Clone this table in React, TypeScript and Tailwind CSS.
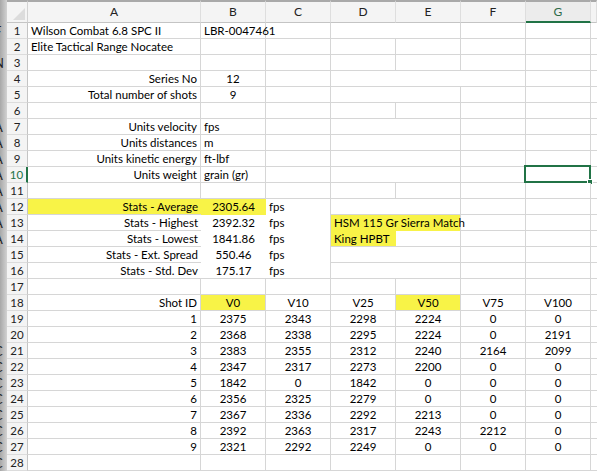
import { ReactNode } from "react";

type Cell = {
  t?: string;
  s?: number;
  a?: "l" | "r" | "c";
  y?: boolean;
  nr?: boolean;
  nb?: boolean;
  sel?: boolean;
};

const SPAN: Record<number, string> = { 1: "", 2: "col-span-2", 3: "col-span-3" };
const ALIGN = { l: "justify-start", r: "justify-end", c: "justify-center" };

const empty = (): Cell[] => [{}, {}, {}, {}, {}, {}, {}];

const label = (a: string, b: string): Cell[] => [
  { t: a, a: "r" },
  { t: b },
  {},
  { s: 2 },
  {},
  {},
];

const stat = (a: string, b: string, d: Cell[], last = false): Cell[] => [
  { t: a, a: "r", nr: true },
  { t: b, a: "c", nr: true, nb: !last },
  { t: "fps", nb: !last },
  ...d,
];

const shots = [
  [2375, 2343, 2298, 2224, 0, 0],
  [2368, 2338, 2295, 2224, 0, 2191],
  [2383, 2355, 2312, 2240, 2164, 2099],
  [2347, 2317, 2273, 2200, 0, 0],
  [1842, 0, 1842, 0, 0, 0],
  [2356, 2325, 2279, 0, 0, 0],
  [2367, 2336, 2292, 2213, 0, 0],
  [2392, 2363, 2317, 2243, 2212, 0],
  [2321, 2292, 2249, 0, 0, 0],
];

const rows: Cell[][] = [
  [{ t: "Wilson Combat 6.8 SPC II" }, { t: "LBR-0047461" }, {}, { s: 2 }, {}, {}],
  [{ t: "Elite Tactical Range Nocatee" }, {}, {}, {}, {}, {}, {}],
  empty(),
  [{ t: "Series No", a: "r" }, { t: "12", a: "c" }, {}, { s: 3 }, {}],
  [{ t: "Total number of shots", a: "r" }, { t: "9", a: "c" }, {}, { s: 2 }, {}, {}],
  empty(),
  label("Units velocity", "fps"),
  label("Units distances", "m"),
  label("Units kinetic energy", "ft-lbf"),
  [{ t: "Units weight", a: "r" }, { t: "grain (gr)" }, {}, { s: 2 }, {}, { sel: true }],
  empty(),
  [
    { t: "Stats - Average", a: "r", y: true, nr: true },
    { t: "2305.64", a: "c", y: true, nr: true, nb: true },
    { t: "fps", nb: true },
    { s: 2 },
    {},
    {},
  ],
  stat("Stats - Highest", "2392.32", [{ t: "HSM 115 Gr Sierra Match", s: 2, y: true, nb: true }, {}, {}]),
  stat("Stats - Lowest", "1841.86", [{ t: "King HPBT", y: true, nr: true }, {}, {}, {}]),
  stat("Stats - Ext. Spread", "550.46", [{ s: 2 }, {}, {}]),
  stat("Stats - Std. Dev", "175.17", [{ s: 2 }, {}, {}], true),
  empty(),
  [
    { t: "Shot ID", a: "r" },
    { t: "V0", a: "c", y: true },
    { t: "V10", a: "c" },
    { t: "V25", a: "c" },
    { t: "V50", a: "c", y: true },
    { t: "V75", a: "c" },
    { t: "V100", a: "c" },
  ],
  ...shots.map((r, i) => [
    { t: String(i + 1), a: "r" as const },
    ...r.map((v) => ({ t: String(v), a: "c" as const })),
  ]),
  empty(),
];

// glyphs peeking out from the window behind
const behind: Record<number, string> = {
  0: "F",
  2: "N",
  6: "A",
  7: "A",
  8: "A",
  9: "A",
  10: "A",
  11: "A",
  12: "A",
  13: "A",
  20: "C",
  21: "C",
  22: "C",
  23: "C",
  24: "C",
  25: "C",
  26: "C",
  27: "C",
};

function SheetCell({ c }: { c: Cell }): ReactNode {
  return (
    <div
      className={`relative flex items-center px-[3px] whitespace-nowrap border-[#d6d6d6] ${SPAN[c.s ?? 1]} ${
        ALIGN[c.a ?? "l"]
      } ${c.nr ? "" : "border-r"} ${c.nb ? "" : "border-b"} ${c.y ? "bg-[#f8f347]" : "bg-white"}`}
    >
      <span className="z-10">{c.t}</span>
      {c.sel && (
        <div className="absolute left-[-2px] top-[-2px] w-[67px] h-[18px] border-2 border-[#217346]">
          <div className="absolute right-[-4px] bottom-[-4px] w-[6px] h-[6px] bg-[#217346] border border-white" />
        </div>
      )}
    </div>
  );
}

export default function App() {
  return (
    <div className="flex w-[597px] h-[471px] overflow-hidden bg-white text-black font-['Lato',sans-serif] text-[11.5px]">
      <div className="w-[7px] shrink-0 flex flex-col bg-gradient-to-r from-[#a8a8a8] to-[#d2d2d2] overflow-hidden">
        <div className="h-[23px] shrink-0" />
        {rows.map((_, i) => (
          <div key={i} className="h-[16px] shrink-0 flex items-center overflow-hidden">
            <span className="ml-[-6px] text-[13px] leading-[14px] text-[#222]">{behind[i] ?? ""}</span>
          </div>
        ))}
      </div>
      <div className="flex-1 grid grid-cols-[21px_173px_65px_65px_65px_65px_65px_65px_1fr] grid-rows-[23px] auto-rows-[16px] content-start">
        <div className="relative border-t-2 border-t-[#a9a9a9] border-r border-b border-r-[#d2d2d2] border-b-[#c4c4c4] bg-[#f4f4f4]">
          <svg className="absolute right-[2px] bottom-[2px]" width="12" height="12" viewBox="0 0 12 12">
            <path d="M12 0 L12 12 L0 12 Z" fill="#dcdcdc" />
          </svg>
        </div>
        {["A", "B", "C", "D", "E", "F", "G", ""].map((h) => (
          <div
            key={h}
            className={`flex items-center justify-center text-[12px] border-t-2 border-t-[#a9a9a9] border-r border-r-[#dedede] ${
              h === "G"
                ? "border-b-2 border-b-[#217346] bg-[#ececec] text-[#2c6a48]"
                : "border-b border-b-[#c4c4c4] bg-[#f4f4f4] text-[#222]"
            }`}
          >
            {h}
          </div>
        ))}
        {rows.map((r, i) => (
          <RowCells key={i} n={i + 1} cells={r} />
        ))}
      </div>
    </div>
  );
}

function RowCells({ n, cells }: { n: number; cells: Cell[] }) {
  return (
    <>
      <div
        className={`flex items-center justify-center bg-[#f4f4f4] border-b border-b-[#dcdcdc] ${
          n === 10 ? "border-r-2 border-r-[#217346] text-[#217346] bg-[#e9e9e9]" : "border-r border-r-[#c4c4c4] text-[#222]"
        }`}
      >
        {n}
      </div>
      {cells.map((c, j) => (
        <SheetCell key={j} c={c} />
      ))}
      <div className="border-b border-[#d6d6d6]" />
    </>
  );
}
